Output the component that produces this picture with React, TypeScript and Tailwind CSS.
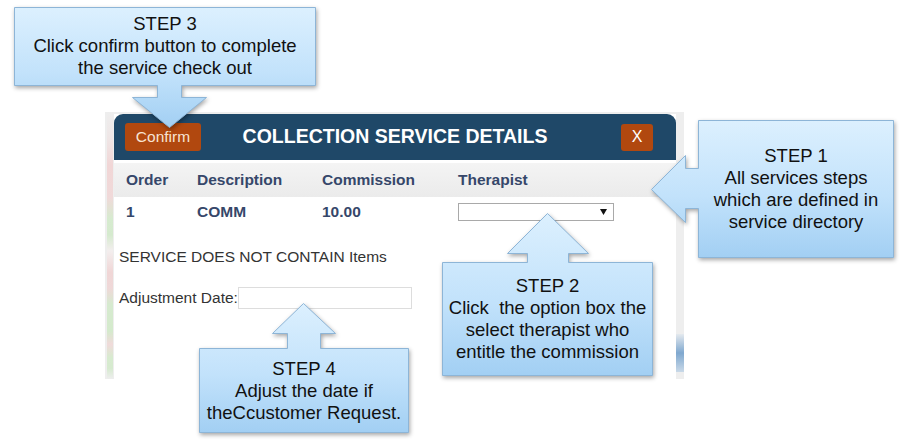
import React from 'react';

interface ShapeProps {
  id: string;
  className: string;
  viewBox: string;
  d: string;
}

// callout outline (box + arrow) drawn as one shape so the gradient runs across both
const CalloutShape: React.FC<ShapeProps> = ({ id, className, viewBox, d }) => (
  <svg
    className={`pointer-events-none absolute drop-shadow-[1px_2px_2px_rgba(0,0,0,0.35)] ${className}`}
    viewBox={viewBox}
  >
    <defs>
      <linearGradient id={id} x1="0" y1="0" x2="0" y2="1">
        <stop offset="0%" stopColor="#dcf0fe" />
        <stop offset="55%" stopColor="#c2e2fb" />
        <stop offset="100%" stopColor="#a2cff3" />
      </linearGradient>
    </defs>
    <path d={d} fill={`url(#${id})`} stroke="#8db5d7" strokeWidth="1" />
  </svg>
);

interface TextProps {
  className: string;
  lines: string[];
}

const CalloutText: React.FC<TextProps> = ({ className, lines }) => (
  <div
    className={`absolute flex flex-col items-center justify-center whitespace-pre text-center text-[18.5px] leading-[22px] text-[#111] ${className}`}
  >
    {lines.map((l) => (
      <span key={l}>{l}</span>
    ))}
  </div>
);

const SelectBox = () => (
  <div className="flex h-[18px] w-[156px] items-center justify-end border border-[#a9a9a9] bg-white pr-[6px]">
    <svg width="7" height="6" viewBox="0 0 7 6">
      <path d="M0 0 H7 L3.5 6 Z" fill="#111" />
    </svg>
  </div>
);

export default function App() {
  return (
    <div className="relative h-[442px] w-[906px] overflow-hidden bg-white font-['Liberation_Sans',Arial,sans-serif]">
      {/* screenshot of the dialog */}
      <div className="pl-[105px] pt-[112px]">
        <div className="flex h-[267px] w-[579px] bg-[#eeeeee]">
          <div className="flex w-[9px] justify-center">
            <div className="w-[6px] bg-[linear-gradient(to_bottom,#eeeeee_0%,#efe6e6_10%,#f1d6d6_20%,#f0d9d9_32%,#d6ebcf_40%,#d5eace_46%,#f3eeee_52%,#f0d6d6_60%,#efd8d8_66%,#d6eacf_72%,#d4eacc_82%,#f0dada_87%,#d7ebcf_92%,#d6eacf_96%,#eeeeee_100%)]" />
          </div>

          <div className="mt-[2px] flex w-[562px] flex-col bg-white">
            <div className="grid h-[46px] grid-cols-[1fr_auto_1fr] items-center rounded-t-[9px] bg-[#1f4868] px-[11px]">
              <button className="h-[28px] w-[76px] justify-self-start rounded-[3px] bg-[#b1480f] text-[15.5px] text-[#f7e3d3]">
                Confirm
              </button>
              <div className="text-[19.5px] font-bold text-white">COLLECTION SERVICE DETAILS</div>
              <button className="mr-[12px] h-[27px] w-[32px] justify-self-end rounded-[3px] bg-[#b1480f] text-[16px] text-white">
                X
              </button>
            </div>

            <div className="mt-[3px] grid h-[34px] grid-cols-[71px_125px_136px_1fr] items-center bg-[linear-gradient(to_bottom,#f4f4f4,#ebebeb)] pl-[12px] text-[15.5px] font-bold text-[#36476a]">
              <span>Order</span>
              <span>Description</span>
              <span>Commission</span>
              <span>Therapist</span>
            </div>
            <div className="grid h-[30px] grid-cols-[71px_125px_136px_1fr] items-center pl-[12px] text-[15.5px] font-bold text-[#36476a]">
              <span>1</span>
              <span>COMM</span>
              <span>10.00</span>
              <SelectBox />
            </div>

            <div className="mt-[21px] pl-[5px] text-[15.5px] leading-[18px] text-[#333]">
              SERVICE DOES NOT CONTAIN Items
            </div>
            <div className="mt-[20px] flex items-center pl-[5px] text-[15.5px] text-[#333]">
              <span>Adjustment Date:</span>
              <div className="h-[22px] w-[174px] border border-[#dddddd] bg-white" />
            </div>
          </div>

          <div className="flex w-[8px] flex-col">
            <div className="h-[222px] bg-[#eeeeee]" />
            <div className="h-[38px] bg-[linear-gradient(to_bottom,#e4e9ee,#7fa8cf_50%,#c9d9e8)]" />
            <div className="flex-1 bg-[#eeeeee]" />
          </div>
        </div>
      </div>

      {/* STEP 3 */}
      <CalloutShape
        id="c3"
        className="left-[10px] top-[3px] h-[130px] w-[312px]"
        viewBox="10 3 312 130"
        d="M14.5,7.5 H315.5 V85.5 H181.5 V97.5 H206.5 L169.5,127.5 L132.5,97.5 H157.5 V85.5 H14.5 Z"
      />
      <CalloutText
        className="left-[14px] top-[7px] h-[78px] w-[302px]"
        lines={['STEP 3', 'Click confirm button to complete', 'the service check out']}
      />

      {/* STEP 1 */}
      <CalloutShape
        id="c1"
        className="left-[646px] top-[116px] h-[146px] w-[252px]"
        viewBox="646 116 252 146"
        d="M698.5,120.5 H893.5 V257.5 H698.5 V208.5 H685.5 V222.5 L651.5,189.5 L685.5,155.5 V168.5 H698.5 Z"
      />
      <CalloutText
        className="left-[698px] top-[120px] h-[137px] w-[196px]"
        lines={['STEP 1', 'All services steps', 'which are defined in', 'service directory']}
      />

      {/* STEP 2 */}
      <CalloutShape
        id="c2"
        className="left-[438px] top-[209px] h-[171px] w-[219px]"
        viewBox="438 209 219 171"
        d="M442.5,262.5 H527.5 V253.5 H507.5 L547.5,213.5 L588.5,253.5 H568.5 V262.5 H652.5 V375.5 H442.5 Z"
      />
      <CalloutText
        className="left-[442px] top-[262px] h-[114px] w-[211px]"
        lines={['STEP 2', 'Click  the option box the', 'select therapist who', 'entitle the commission']}
      />

      {/* STEP 4 */}
      <CalloutShape
        id="c4"
        className="left-[195px] top-[299px] h-[138px] w-[218px]"
        viewBox="195 299 218 138"
        d="M199.5,348.5 H287.5 V333.5 H272.5 L303.5,303.5 L335.5,333.5 H320.5 V348.5 H408.5 V432.5 H199.5 Z"
      />
      <CalloutText
        className="left-[199px] top-[348px] h-[85px] w-[210px]"
        lines={['STEP 4', 'Adjust the date if', 'theCcustomer Request.']}
      />
    </div>
  );
}
